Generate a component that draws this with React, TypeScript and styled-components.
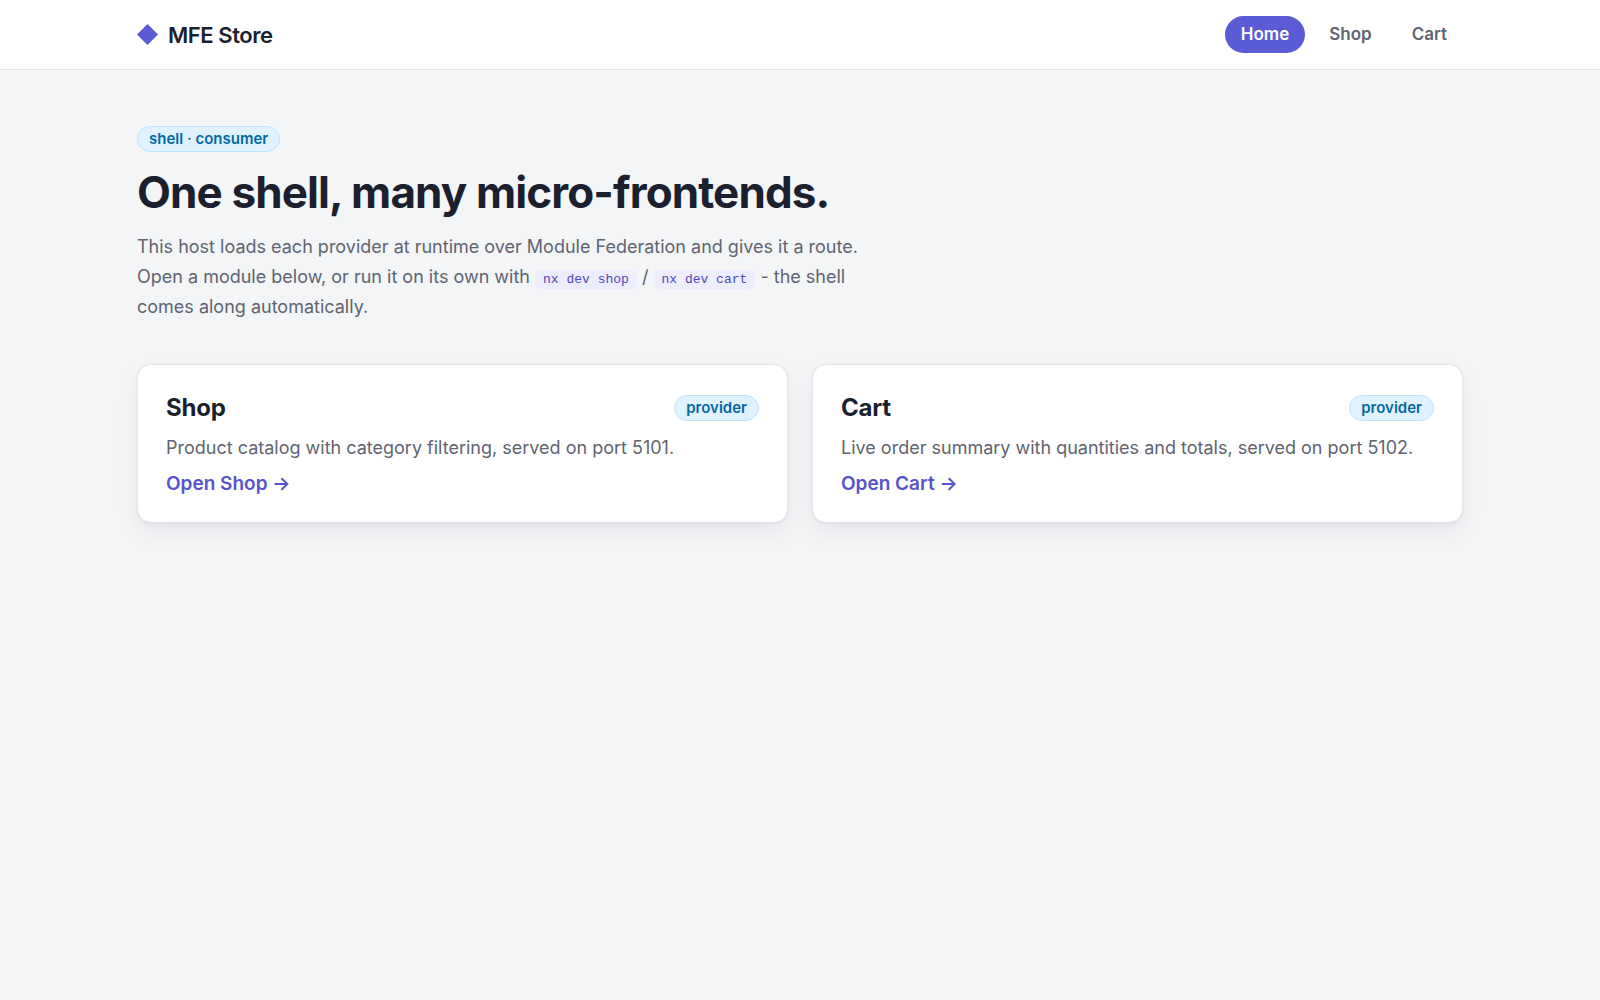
import React from "react";
import styled, { createGlobalStyle } from "styled-components";

const GlobalStyle = createGlobalStyle`
  *, *::before, *::after { box-sizing: border-box; }
  body {
    margin: 0;
    min-height: 100vh;
    background: #f3f5f7;
    color: #1b1f2e;
    font-family: Inter, "Liberation Sans", sans-serif;
    font-size: 18px;
    line-height: 30px;
    -webkit-font-smoothing: antialiased;
  }
`;

const Header = styled.header`
  background: #fff;
  border-bottom: 1px solid #e2e6ea;
`;

const Bar = styled.div`
  display: flex;
  align-items: center;
  justify-content: space-between;
  max-width: 1374px;
  margin: 0 auto;
  padding: 16px 24px;
`;

const Brand = styled.a`
  display: flex;
  align-items: center;
  gap: 10px;
  color: inherit;
  font-size: 22px;
  font-weight: 600;
  letter-spacing: -0.02em;
  text-decoration: none;
`;

const Diamond = styled.svg`
  width: 21px;
  height: 21px;
  fill: #5b5bd6;
`;

const Nav = styled.nav`
  display: flex;
  gap: 8px;
`;

const NavLink = styled.a<{ $active?: boolean }>`
  padding: 4px 16px;
  border-radius: 999px;
  background: ${(p) => (p.$active ? "#5b5bd6" : "transparent")};
  color: ${(p) => (p.$active ? "#fff" : "#5f6470")};
  font-size: 17px;
  font-weight: 600;
  line-height: 29px;
  text-decoration: none;
`;

const Main = styled.main`
  max-width: 1374px;
  margin: 0 auto;
  padding: 56px 24px;
`;

const Hero = styled.section`
  display: flex;
  flex-direction: column;
  align-items: flex-start;
  max-width: 736px;
  margin-bottom: 42px;
`;

const Badge = styled.span`
  padding: 0 11px;
  border: 1px solid #bae6fd;
  border-radius: 999px;
  background: #e0f2fe;
  color: #0369a1;
  font-size: 15px;
  font-weight: 600;
  line-height: 24px;
`;

const Title = styled.h1`
  margin: 13px 0;
  font-size: 44px;
  font-weight: 700;
  line-height: 54px;
  letter-spacing: -0.02em;
`;

const Text = styled.p`
  margin: 0;
  color: #5f6470;
`;

const Code = styled.code`
  padding: 2px 8px;
  border-radius: 6px;
  background: #eeedfd;
  color: #4f48b8;
  font-family: "Liberation Mono", monospace;
  font-size: 13px;
  line-height: 1;
`;

const Grid = styled.div`
  display: grid;
  grid-template-columns: repeat(auto-fit, minmax(320px, 1fr));
  gap: 24px;
`;

const Card = styled.article`
  display: flex;
  flex-direction: column;
  gap: 6px;
  padding: 28px 28px 23px;
  border: 1px solid #e2e6ea;
  border-radius: 14px;
  background: #fff;
  box-shadow: 0 1px 3px rgba(20, 24, 32, 0.06), 0 10px 24px rgba(20, 24, 32, 0.06);
`;

const CardHead = styled.div`
  display: flex;
  align-items: center;
  justify-content: space-between;
  margin-bottom: 4px;
`;

const CardTitle = styled.h2`
  margin: 0;
  font-size: 24px;
  font-weight: 700;
  letter-spacing: -0.01em;
`;

const CardLink = styled.a`
  align-self: flex-start;
  color: #5753cc;
  font-size: 19px;
  font-weight: 600;
  text-decoration: none;
`;

const modules = [
  { name: "Shop", text: "Product catalog with category filtering, served on port 5101." },
  { name: "Cart", text: "Live order summary with quantities and totals, served on port 5102." },
];

export default function App() {
  return (
    <>
      <GlobalStyle />
      <Header>
        <Bar>
          <Brand href="#home">
            <Diamond viewBox="0 0 20 20" aria-hidden="true">
              <path d="M10 0 20 10 10 20 0 10Z" />
            </Diamond>
            MFE Store
          </Brand>
          <Nav>
            <NavLink href="#home" $active aria-current="page">Home</NavLink>
            <NavLink href="#shop">Shop</NavLink>
            <NavLink href="#cart">Cart</NavLink>
          </Nav>
        </Bar>
      </Header>
      <Main>
        <Hero>
          <Badge>shell · consumer</Badge>
          <Title>One shell, many micro-frontends.</Title>
          <Text>
            This host loads each provider at runtime over Module Federation and gives it a route.
            Open a module below, or run it on its own with <Code>nx dev shop</Code> /{" "}
            <Code>nx dev cart</Code> - the shell comes along automatically.
          </Text>
        </Hero>
        <Grid>
          {modules.map((m) => (
            <Card key={m.name}>
              <CardHead>
                <CardTitle>{m.name}</CardTitle>
                <Badge>provider</Badge>
              </CardHead>
              <Text>{m.text}</Text>
              <CardLink href={`#${m.name.toLowerCase()}`}>Open {m.name} →</CardLink>
            </Card>
          ))}
        </Grid>
      </Main>
    </>
  );
}
